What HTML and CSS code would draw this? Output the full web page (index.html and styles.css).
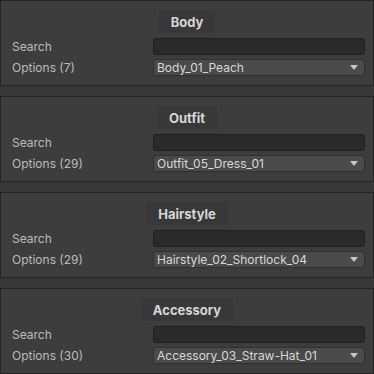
FILE: index.html
```html
<!DOCTYPE html>
<html>
<head>
<meta charset="utf-8">
<link rel="stylesheet" href="styles.css">
</head>
<body>
<div class="stack">
  <section class="panel">
    <div class="head"><span class="chip">Body</span></div>
    <div class="row"><span class="label">Search</span><div class="search"></div></div>
    <div class="row"><span class="label">Options (7)</span><div class="drop"><span>Body_01_Peach</span><i class="arrow"></i></div></div>
  </section>
  <section class="panel">
    <div class="head"><span class="chip">Outfit</span></div>
    <div class="row"><span class="label">Search</span><div class="search"></div></div>
    <div class="row"><span class="label">Options (29)</span><div class="drop"><span>Outfit_05_Dress_01</span><i class="arrow"></i></div></div>
  </section>
  <section class="panel">
    <div class="head"><span class="chip">Hairstyle</span></div>
    <div class="row"><span class="label">Search</span><div class="search"></div></div>
    <div class="row"><span class="label">Options (29)</span><div class="drop"><span>Hairstyle_02_Shortlock_04</span><i class="arrow"></i></div></div>
  </section>
  <section class="panel">
    <div class="head"><span class="chip">Accessory</span></div>
    <div class="row"><span class="label">Search</span><div class="search"></div></div>
    <div class="row"><span class="label">Options (30)</span><div class="drop"><span>Accessory_03_Straw-Hat_01</span><i class="arrow"></i></div></div>
  </section>
</div>
</body>
</html>
```
FILE: styles.css
```css
html, body {
  margin: 0;
  padding: 0;
  background: #383838;
  font-family: Inter, "Noto Sans", sans-serif;
  font-size: 12px;
}
.stack {
  display: flex;
  flex-direction: column;
  gap: 10px;
  width: 374px;
}
.panel {
  box-sizing: border-box;
  height: 86px;
  border: 1px solid #242424;
  background: #3d3d3d;
  padding: 9px 8px 8px 10px;
  display: flex;
  flex-direction: column;
}
.head {
  display: flex;
  justify-content: center;
  height: 23px;
  margin-bottom: 5px;
  margin-left: -2px;
}
.chip {
  display: flex;
  align-items: center;
  height: 23px;
  padding: 0 12px;
  background: #383838;
  color: #d6d6d6;
  font-weight: 700;
  font-size: 13px;
}
.row {
  display: grid;
  grid-template-columns: 142px 1fr;
  align-items: center;
  height: 17px;
}
.row + .row {
  margin-top: 4px;
}
.label {
  color: #bcbcbc;
  padding-left: 1px;
}
.search {
  height: 17px;
  box-sizing: border-box;
  background: #2a2a2a;
  border: 1px solid #202020;
  border-radius: 3px;
}
.drop {
  height: 17px;
  box-sizing: border-box;
  background: #4a4a4a;
  border: 1px solid #303030;
  border-radius: 3px;
  display: flex;
  align-items: center;
  justify-content: space-between;
  padding: 0 6px 0 3px;
  color: #d8d8d8;
}
.arrow {
  width: 0;
  height: 0;
  border-left: 4px solid transparent;
  border-right: 4px solid transparent;
  border-top: 5px solid #c8c8c8;
}
```
